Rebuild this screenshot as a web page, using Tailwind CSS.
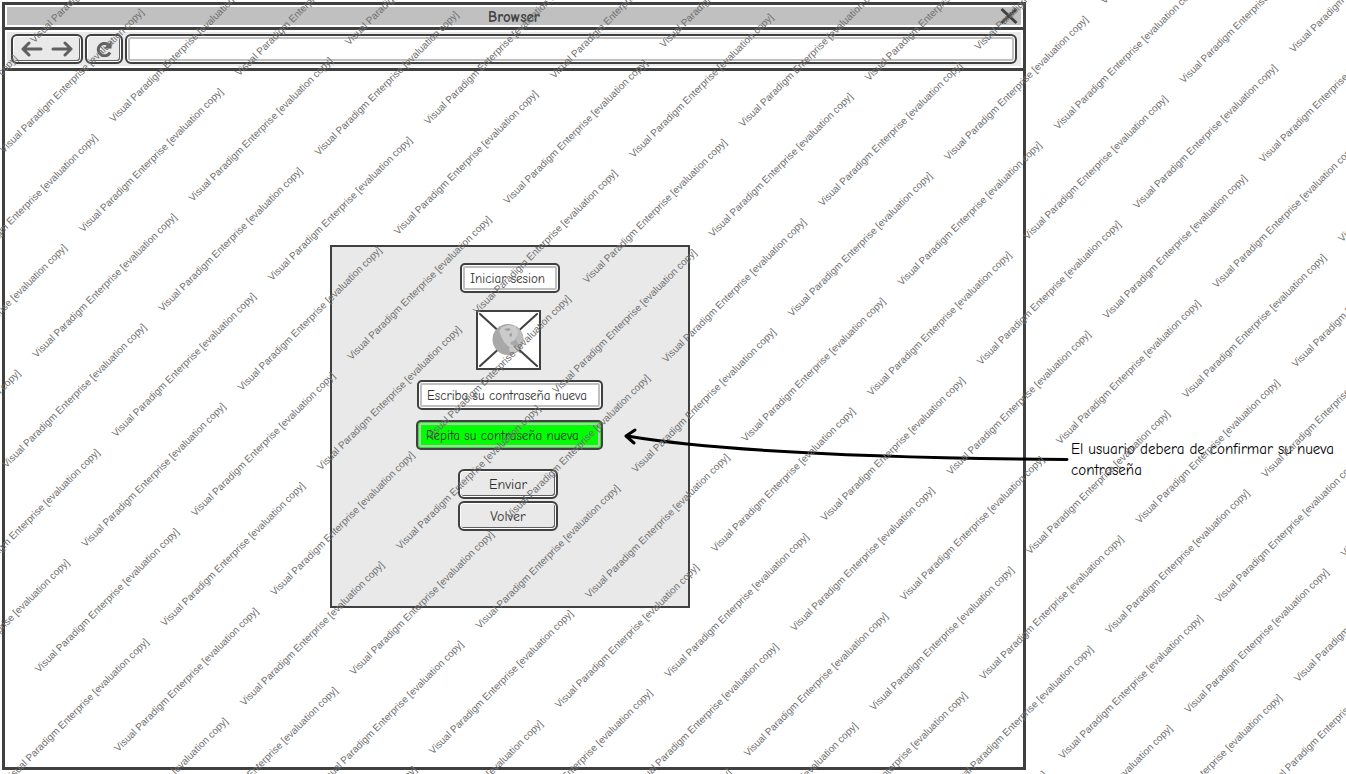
<!DOCTYPE html>
<html lang="es">
<head>
<meta charset="utf-8">
<title>Browser</title>
<script src="https://cdn.jsdelivr.net/npm/@tailwindcss/browser@4"></script>
</head>
<body class="bg-white font-['Comic_Neue','Noto_Sans',sans-serif] text-[13px] text-[#303030]">
<div class="relative flex min-h-screen overflow-hidden pt-0.5 pb-1 pl-0.5">
  <main class="flex flex-1 flex-col border-3 border-[#404040]">
    <header class="relative border-b-3 border-[#404040] p-0.5">
      <h1 class="h-[18px] bg-[#c0c0c0] text-center text-[15px] leading-[20px] font-bold text-[#404040]">Browser</h1>
      <button aria-label="Cerrar" class="absolute top-0.5 right-[5px] h-[18px] w-[18px]">
        <svg class="h-full w-full" viewBox="0 0 18 18" fill="none" stroke="#404040" stroke-width="3"><path d="M1.500 2l15 14M16.500 2l-15 14"/></svg>
      </button>
    </header>
    <nav class="border-b-3 border-[#404040] px-0.5 py-0.5">
      <div class="flex gap-0.5 bg-[#e9e9e9] py-0.5 pr-1 pl-1">
        <div class="flex h-[30px] w-[72px] items-center justify-between rounded-md border-2 border-[#404040] px-2 shadow-[inset_0_0_0_1px_white,inset_-1px_-1px_0_1px_#606060]">
          <button aria-label="Atrás"><svg class="h-4 w-[22px]" viewBox="0 0 22 16" fill="none" stroke="#606060" stroke-width="3" stroke-linecap="round" stroke-linejoin="round"><path d="M20 8H2M8 2L2 8l6 6"/></svg></button>
          <button aria-label="Adelante"><svg class="h-4 w-[22px]" viewBox="0 0 22 16" fill="none" stroke="#606060" stroke-width="3" stroke-linecap="round" stroke-linejoin="round"><path d="M2 8h18M14 2l6 6-6 6"/></svg></button>
        </div>
        <button aria-label="Recargar" class="flex h-[30px] w-[38px] items-center justify-center rounded-md border-2 border-[#404040] shadow-[inset_0_0_0_1px_white,inset_-1px_-1px_0_1px_#606060]">
          <svg class="h-4 w-4" viewBox="0 0 16 16" fill="none" stroke="#606060" stroke-width="3"><path d="M14 11.500A6.200 6.200 0 1 1 12 3.500"/><path d="M15.500 0v7.500H8z" fill="#606060" stroke="none"/></svg>
        </button>
        <input aria-label="Dirección" class="h-[30px] min-w-0 flex-1 rounded-md border-2 border-[#404040] bg-white px-2 shadow-[inset_0_0_0_1px_white,inset_0_0_0_3px_#c0c0c0]">
      </div>
    </nav>
    <section class="flex flex-1 justify-center pt-[174px] pr-2">
      <form class="flex h-[363px] w-[360px] flex-col items-center border-2 border-[#404040] bg-[#e9e9e9] pt-4">
        <input aria-label="Iniciar sesion" value="Iniciar sesion" class="h-[30px] w-[100px] rounded-[5px] border-2 border-[#404040] bg-white px-2 shadow-[inset_0_0_0_1px_white,inset_0_0_0_3px_#c0c0c0]">
        <div class="pt-[17px] pr-[3px]">
          <svg class="block h-[60px] w-[65px]" viewBox="0 0 65 60" role="img" aria-label="Imagen">
            <rect x="1" y="1" width="63" height="58" fill="white" stroke="#404040" stroke-width="2"/>
            <path d="M4 4l57 52M61 4L4 56" stroke="#404040" stroke-width="2" stroke-linecap="round"/>
            <circle cx="32" cy="29.500" r="15.500" fill="#a8a8a8"/>
            <path d="M23 21l3-4 6-2 7 1 2 3 3 3 1 5-2 2-3-2-1 3-4 2-1 2 3 1 2 3-2 1-5-3-4-4-3-6-1-3z" fill="#cbcbcb"/>
            <path d="M41 17q7 6 6 13-1 5-3 7l-3-5-1-4 2-4z" fill="#bcbcbc"/>
            <path d="M33 38l4-2 6 2-2 3-5 2.500-2-1z" fill="#cbcbcb"/>
            <path d="M28 19l5-1 2 2-4 1zM33 24l3-1v3l-2 1z" fill="#a0a0a0"/>
          </svg>
        </div>
        <input aria-label="Escriba su contraseña nueva" value="Escriba su contraseña nueva" class="mt-2.5 h-[30px] w-[186px] rounded-[5px] border-2 border-[#404040] bg-white px-2 shadow-[inset_0_0_0_1px_white,inset_0_0_0_3px_#c0c0c0]">
        <div class="pt-2.5 pr-px">
          <input aria-label="Repita su contraseña nueva" value="Repita su contraseña nueva" class="block h-[30px] w-[187px] rounded-[5px] border-2 border-[#404040] bg-[#00ff00] px-2 shadow-[inset_0_0_0_1px_#00ff00,inset_0_0_0_3px_#c0c0c0]">
        </div>
        <div class="mt-[19px] flex flex-col gap-0.5 pr-1">
          <button type="button" class="h-[30px] w-[100px] rounded-md border-2 border-[#404040] text-[14px] shadow-[inset_0_0_0_1px_white,inset_-1px_-1px_0_1px_#606060]">Enviar</button>
          <button type="button" class="h-[30px] w-[100px] rounded-md border-2 border-[#404040] text-[14px] shadow-[inset_0_0_0_1px_white,inset_-1px_-1px_0_1px_#606060]">Volver</button>
        </div>
      </form>
    </section>
  </main>
  <aside class="relative mt-[437px] ml-[45px] w-[275px] self-start text-[15px] leading-[21px] text-black">
    <svg class="absolute top-[-13px] right-full h-10 w-[450px]" viewBox="0 0 450 40" fill="none" stroke="black" stroke-width="3" stroke-linecap="round" stroke-linejoin="round"><path d="M446 33.500Q130 31 6 10M14 4l-9 6 8 7"/></svg>
    <p>El usuario debera de confirmar su nueva contraseña</p>
  </aside>
  <svg class="pointer-events-none absolute inset-0 h-full w-full" aria-hidden="true"><g id="marks" class="font-['Liberation_Sans',sans-serif] text-[10px]" fill="#707070" transform="rotate(-45)"></g></svg>
</div>
<script>
// Evaluation watermark: staggered diagonal lines covering the window.
const marks = document.getElementById('marks');
const stepAlong = 220.9, stepAcross = 112.15, length = 145;
for (let row = -3; row < 16; row++) {
  for (let col = -8; col < 8; col++) {
    for (const [dx, dy] of [[0, 0], [121.6, 56.4]]) {
      const u = -6.5 + col * stepAlong + dx;
      const v = 167 + row * stepAcross + dy;
      const x = (u + v) * Math.SQRT1_2, y = (v - u) * Math.SQRT1_2;
      if (x + length < 0 || x > innerWidth || y < 0 || y - length > innerHeight) continue;
      // The lower left corner stays clear.
      if (x < 0 && y > innerHeight + 40) continue;
      const t = document.createElementNS('http://www.w3.org/2000/svg', 'text');
      t.setAttribute('x', u);
      t.setAttribute('y', v);
      t.textContent = 'Visual Paradigm Enterprise [evaluation copy]';
      marks.appendChild(t);
    }
  }
}
</script>
</body>
</html>
